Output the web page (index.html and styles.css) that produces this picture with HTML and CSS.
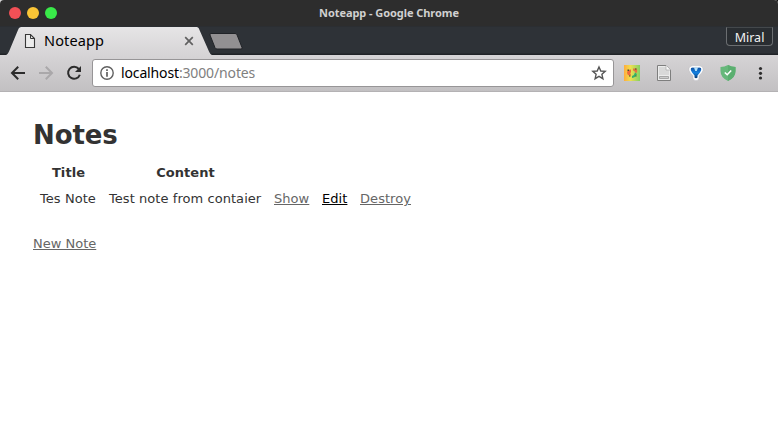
FILE: index.html
```html
<!DOCTYPE html>
<html lang="en">
<head>
<meta charset="utf-8">
<title>Noteapp</title>
<link rel="stylesheet" href="styles.css">
</head>
<body>
<div class="window">
  <header class="titlebar">
    <div class="lights"><i class="light red"></i><i class="light yellow"></i><i class="light green"></i></div>
    <span class="window-title">Noteapp - Google Chrome</span>
  </header>
  <nav class="tabstrip">
    <div class="tab">
      <svg class="tab-shape" width="206" height="29" viewBox="0 0 206 29">
        <defs><linearGradient id="tabfill" x1="0" y1="0" x2="0" y2="1"><stop offset="0" stop-color="#e6e5e6"/><stop offset="1" stop-color="#d6d4d6"/></linearGradient></defs>
        <path d="M0 29C1.500 28.500 2 27.500 3 25.500L12 4C13 1.800 13.500 1 15.500 1H190.500C192 1 192.700 1.800 193.500 4L203 25.500C204 27.500 204.500 28.500 206 29Z" fill="url(#tabfill)"/>
      </svg>
      <svg class="page-icon" width="12" height="16" viewBox="0 0 12 16"><path d="M1.500 1.500H6.500L10.500 5.500V14.500H1.500Z" fill="#ececec" stroke="#383838" stroke-width="1.100"/><path d="M6.500 1.500V5.500H10.500" fill="none" stroke="#383838"/></svg>
      <span class="tab-title">Noteapp</span>
      <svg class="close" width="10" height="10" viewBox="0 0 10 10"><path d="M1.200 1.200L8.800 8.800M8.800 1.200L1.200 8.800" stroke="#606060" stroke-width="1.700"/></svg>
    </div>
    <svg class="new-tab" width="34" height="17" viewBox="0 0 34 17"><path d="M2 .5H26Q27.500 .5 28 1.800L33 14.500Q33.400 16 32 16H8Q6.500 16 6 14.700L1 2Q.5 .5 2 .5Z" fill="#929092" stroke="#202327"/></svg>
    <div class="profile">Miral</div>
  </nav>
  <div class="toolbar">
    <svg class="nav-icon" width="16" height="16" viewBox="0 0 16 16"><path d="M15 8H2.500M8.200 1.700L2 8L8.200 14.300" fill="none" stroke="#2c2c2c" stroke-width="2"/></svg>
    <svg class="nav-icon" width="16" height="16" viewBox="0 0 16 16"><path d="M1 8H13.500M7.800 1.700L14 8L7.800 14.300" fill="none" stroke="#aaa8aa" stroke-width="2"/></svg>
    <svg class="nav-icon" width="16" height="16" viewBox="0 0 16 16"><path d="M12.800 4A6 6 0 1 0 13.800 9.700" fill="none" stroke="#2c2c2c" stroke-width="2"/><path d="M15 1V7H9Z" fill="#2c2c2c"/></svg>
    <div class="omnibox">
      <svg width="14" height="14" viewBox="0 0 14 14"><circle cx="7" cy="7" r="6.200" fill="none" stroke="#606060" stroke-width="1.400"/><path d="M7 6V10.700M7 3.200V5" stroke="#606060" stroke-width="1.700"/></svg>
      <span class="url"><span class="host">localhost</span>:3000/notes</span>
      <svg class="star" width="16" height="16" viewBox="0 0 16 16"><path d="M8 2L9.800 6L14.200 6.400L10.900 9.300L11.900 13.700L8 11.400L4.100 13.700L5.100 9.300L1.800 6.400L6.200 6Z" fill="none" stroke="#555" stroke-width="1.400"/></svg>
    </div>
    <div class="extensions">
      <svg width="16" height="16" viewBox="0 0 16 16">
        <defs><linearGradient id="mix" x1="0" y1="0" x2="1" y2="0"><stop offset="0" stop-color="#ffac3c"/><stop offset=".4" stop-color="#f0df50"/><stop offset="1" stop-color="#82d163"/></linearGradient></defs>
        <path d="M0 0H16V16H0Z" fill="url(#mix)"/>
        <path d="M7 4.500Q3 4.500 3 8Q3 10 6 11L7 9.500Q5.500 8.500 7 7Z" fill="#ee6a3c"/>
        <path d="M9 3.500H12.500Q14 6 12.500 8L11 7.500Q11 5.500 9 5.500Z" fill="#e5703f"/>
        <path d="M11 7.500L13 9Q12 12.500 8 13V11Q10.500 10.500 11 7.500Z" fill="#35b06a"/>
        <path d="M3.500 4.500H5V6H3.500ZM11 3.500H12.500V4.500H11ZM5 10.500H6.500V11.500H5ZM11.500 10.500H12.500V11.500H11.500Z" fill="#4a4a2b"/>
      </svg>
      <svg width="16" height="16" viewBox="0 0 16 16"><path d="M1.500 .5H10L14.500 5V15.500H1.500Z" fill="#ececec" stroke="#7e7e7e"/><path d="M3 2H9.500L13 5.500V10H3Z" fill="#d9d9d9"/><path d="M10 .5V5H14.500" fill="#fafafa" stroke="#aaa" stroke-width=".7"/><path d="M3.500 11.500H12.500V13.500H3.500Z" fill="#ccc" stroke="#999" stroke-width=".8"/></svg>
      <svg width="16" height="16" viewBox="0 0 16 16">
        <defs><linearGradient id="blue" x1="0" y1="0" x2="0" y2="1"><stop offset="0" stop-color="#0d4da0"/><stop offset=".5" stop-color="#1683e2"/><stop offset="1" stop-color="#06366f"/></linearGradient></defs>
        <path d="M4 .8Q6 .3 8 .8Q10 .3 12 .8Q15.800 2 15 5.500Q14.500 7.500 11 10.800V13Q10.700 15.700 8 15.700T5 13V10.800Q1.500 7.500 1 5.500Q.2 2 4 .8Z" fill="#fff" stroke="#b8b8bf" stroke-width=".5"/>
        <path d="M3 3Q5 2 6 2.800H10Q11 2 13 3Q14 5 12 7.500L9.500 10.500V12.500Q8 14 6.500 12.500V10.500L4 7.500Q2 5 3 3Z" fill="url(#blue)"/><path d="M6 2.500H10L8.800 6H7.200Z" fill="#b3e2fb"/>
      </svg>
      <svg width="16" height="16" viewBox="0 0 16 16"><path d="M8 0Q11.500 1.800 15.500 2V6Q15.500 12.500 8 16Q.5 12.500 .5 6V2Q4.500 1.800 8 0Z" fill="#67b87b"/><path d="M8 0Q11.500 1.800 15.500 2V6Q15.500 12.500 8 16Z" fill="#5baf70"/><path d="M4.800 7.500L7.200 9.800L11.200 5.400" fill="none" stroke="#fff" stroke-width="1.500"/></svg>
      <svg width="16" height="16" viewBox="0 0 16 16" fill="#2c2c2c"><circle cx="8.500" cy="3.500" r="1.600"/><circle cx="8.500" cy="8.300" r="1.600"/><circle cx="8.500" cy="13" r="1.600"/></svg>
    </div>
  </div>
  <main class="page">
    <h1>Notes</h1>
    <table>
      <colgroup><col class="col-title"><col class="col-content"><col class="col-show"><col class="col-edit"><col class="col-destroy"></colgroup>
      <thead><tr><th>Title</th><th>Content</th><th colspan="3"></th></tr></thead>
      <tbody><tr><td>Tes Note</td><td>Test note from contaier</td><td><a href="#">Show</a></td><td><a class="visited" href="#">Edit</a></td><td><a href="#">Destroy</a></td></tr></tbody>
    </table>
    <br>
    <a href="#">New Note</a>
  </main>
</div>
</body>
</html>
```
FILE: styles.css
```css
* { box-sizing: border-box; }
body { margin: 0; background: linear-gradient(90deg, #d8d8d8 50%, #111 50%); }
svg { display: block; flex: none; }
.window { width: 778px; height: 447px; overflow: hidden; background: #fff; border-radius: 4px 4px 0 0; }
.titlebar {
  display: grid; grid-template-columns: 1fr auto 1fr; align-items: center;
  height: 26px; padding: 0 9px; background: #2d2d2d;
}
.lights { display: flex; gap: 6px; }
.light { width: 12px; height: 12px; border-radius: 50%; }
.red { background: #f25056; }
.yellow { background: #fac536; }
.green { background: #39ea49; }
.window-title { font: bold 11px/16px "Noto Sans", sans-serif; color: #d0d0d0; white-space: nowrap; letter-spacing: -.06px; }
.tabstrip {
  display: flex; height: 29px; padding-left: 6px;
  background: linear-gradient(#2e3237 26px, #202327 27px); border-top: 1px solid #2b2e32;
}
.tab {
  position: relative; display: flex; align-items: center;
  width: 206px; height: 28px; padding: 0 17px 1px 18px;
}
.tab-shape { position: absolute; left: 0; top: -1px; }
.page-icon, .tab-title, .close { position: relative; }
.tab-title { margin: -2px 0 0 8px; font: 14.500px/20px "Noto Sans", sans-serif; letter-spacing: .12px; color: #000; }
.close { margin: 0 1px 0 auto; }
.new-tab { margin: 6px 0 0 -3px; }
.profile {
  width: 47px; height: 19px; margin: 0 5px 0 auto;
  border: 1px solid #6b6e71; border-top-color: #44484b; border-radius: 0 0 4px 4px;
  background: #292d31; color: #f1f1f1;
  font: 12.500px/19px "Noto Sans", sans-serif; text-align: center;
}
.toolbar {
  display: flex; align-items: center; height: 37px; padding: 0 10px;
  background: linear-gradient(#d6d4d6, #c2c0c2); border-bottom: 1px solid #b4b2b4;
}
.nav-icon { margin-right: 12px; }
.omnibox {
  display: flex; align-items: center; width: 522px; height: 28px;
  margin-left: -2px; padding: 0 6px 0 7px;
  background: #fff; border: 1px solid #979597; border-radius: 3px;
}
.url { margin-left: 7px; font: 14px/20px "Noto Sans", sans-serif; letter-spacing: -.14px; color: #808080; white-space: nowrap; }
.host { color: #000; }
.star { margin-left: auto; }
.extensions { display: flex; gap: 16px; margin-left: 10px; }
.page { padding: 34px 33px 33px; font: 13px/18px "DejaVu Sans", Verdana, sans-serif; color: #333; }
h1 { margin: 0 0 17.420px; font-size: 26px; line-height: 18px; letter-spacing: -.12px; }
table { border-spacing: 2px; letter-spacing: .06px; table-layout: fixed; width: 385px; }
.col-title { width: 67px; }
.col-content { width: 163px; }
.col-show { width: 46px; }
.col-edit { width: 36px; }
.col-destroy { width: 61px; }
th { padding: 1px; }
td { padding: 5px 5px 7px; white-space: nowrap; }
a { color: #666; }
.visited { color: #000; }
```
